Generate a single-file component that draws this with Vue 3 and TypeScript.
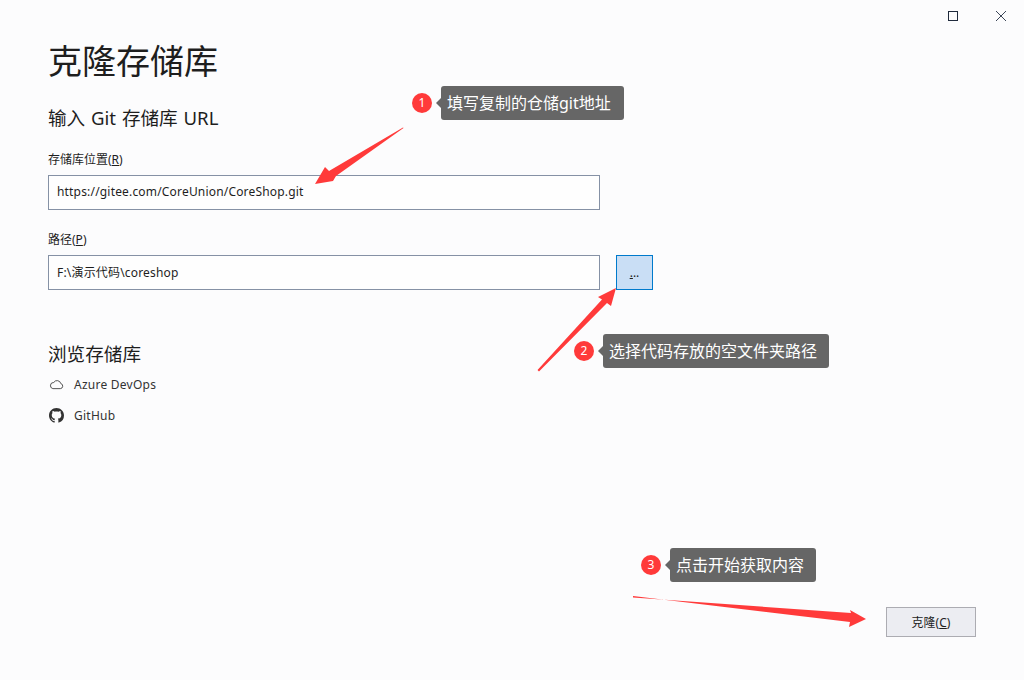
<script setup lang="ts">
interface Note {
  no: number
  text: string
  left: number
  top: number
  width: number
}

const notes: Note[] = [
  { no: 1, text: '填写复制的仓储git地址', left: 412, top: 86, width: 183 },
  { no: 2, text: '选择代码存放的空文件夹路径', left: 574, top: 334, width: 226 },
  { no: 3, text: '点击开始获取内容', left: 641, top: 548, width: 146 },
]

const arrows: string[] = [
  '403,127.5 403.5,128 336,176 333,181 315,184 325,167 329,171',
  '537.5,370 602,299.5 598,297 616,288 611,306 607,303 539,371.5',
  '633,596 633,597.5 851,613 850,610 866,619 849,627 850,622',
]
</script>

<template>
  <div class="dialog">
    <div class="window-bar">
      <svg class="win-btn" viewBox="0 0 10 10" width="10" height="10">
        <rect x="0.5" y="0.5" width="9" height="9" fill="none" stroke="#1f2a3c" />
      </svg>
      <svg class="win-btn" viewBox="0 0 10 10" width="10" height="10">
        <path d="M0 0L10 10M10 0L0 10" fill="none" stroke="#3c4658" />
      </svg>
    </div>

    <h1 class="title">克隆存储库</h1>
    <h2 class="section">输入 Git 存储库 URL</h2>

    <label class="field-label">存储库位置(<u>R</u>)</label>
    <div class="field-row">
      <div class="input">https://gitee.com/CoreUnion/CoreShop.git</div>
    </div>

    <label class="field-label second">路径(<u>P</u>)</label>
    <div class="field-row">
      <div class="input">F:\演示代码\coreshop</div>
      <button class="browse"><u>.</u>..</button>
    </div>

    <h2 class="section browse-title">浏览存储库</h2>
    <ul class="providers">
      <li>
        <svg viewBox="0 0 16 12" width="15" height="11" fill="none" stroke="#444" stroke-width="1">
          <path d="M4 10.5h8.2a2.8 2.8 0 0 0 .5-5.5A4.2 4.2 0 0 0 5 3.8 3.4 3.4 0 0 0 4 10.5z" />
        </svg>
        <span>Azure DevOps</span>
      </li>
      <li>
        <svg viewBox="0 0 16 16" width="15" height="15" fill="#333">
          <path d="M8 0C3.58 0 0 3.58 0 8c0 3.54 2.29 6.53 5.47 7.59.4.07.55-.17.55-.38 0-.19-.01-.82-.01-1.49-2.01.37-2.53-.49-2.69-.94-.09-.23-.48-.94-.82-1.13-.28-.15-.68-.52-.01-.53.63-.01 1.08.58 1.23.82.72 1.21 1.87.87 2.33.66.07-.52.28-.87.51-1.07-1.78-.2-3.64-.89-3.64-3.95 0-.87.31-1.59.82-2.15-.08-.2-.36-1.02.08-2.12 0 0 .67-.21 2.2.82.64-.18 1.32-.27 2-.27s1.36.09 2 .27c1.53-1.04 2.2-.82 2.2-.82.44 1.1.16 1.92.08 2.12.51.56.82 1.27.82 2.15 0 3.07-1.87 3.75-3.65 3.95.29.25.54.73.54 1.48 0 1.07-.01 1.93-.01 2.2 0 .21.15.46.55.38A8.01 8.01 0 0 0 16 8c0-4.42-3.58-8-8-8z" />
        </svg>
        <span>GitHub</span>
      </li>
    </ul>

    <footer class="actions">
      <button class="clone">克隆(<u>C</u>)</button>
    </footer>

    <svg class="arrows" width="1024" height="680" viewBox="0 0 1024 680">
      <polygon v-for="(points, i) in arrows" :key="i" :points="points" fill="#ff3a3a" />
    </svg>

    <div
      v-for="note in notes"
      :key="note.no"
      class="note"
      :style="{ left: `${note.left}px`, top: `${note.top}px` }"
    >
      <span class="badge">{{ note.no }}</span>
      <span class="tip" :style="{ width: `${note.width}px` }">{{ note.text }}</span>
    </div>
  </div>
</template>

<style scoped>
.dialog {
  position: relative;
  box-sizing: border-box;
  width: 1024px;
  height: 680px;
  padding: 0 48px;
  display: flex;
  flex-direction: column;
  overflow: hidden;
  background: #fcfcfd;
  color: #1e1e1e;
  font-family: "Noto Sans", "Noto Sans CJK SC", sans-serif;
  font-size: 12px;
}

.window-bar {
  display: flex;
  justify-content: flex-end;
  gap: 38px;
  height: 40px;
  margin-right: -30px;
  padding-top: 11px;
  box-sizing: border-box;
}

.win-btn {
  display: block;
}

.title {
  margin: -1px 0 1px;
  font-size: 34px;
  font-weight: 400;
  line-height: 44px;
  color: #1e1e1e;
}

.section {
  margin: 21px 0 0;
  font-size: 18.6px;
  font-weight: 400;
  line-height: 26px;
  word-spacing: 1px;
  color: #1e1e1e;
}

.field-label {
  margin-top: 20px;
  margin-bottom: -1px;
  line-height: 18px;
  font-size: 12px;
  color: #1e1e1e;
}

.field-label.second {
  margin-top: 21px;
}

.field-row {
  display: flex;
  gap: 16px;
  margin-top: 7px;
}

.input {
  box-sizing: border-box;
  width: 552px;
  height: 35px;
  padding: 0 8px 2px;
  display: flex;
  align-items: center;
  border: 1px solid #8591a5;
  background: #fefefe;
  font-size: 12px;
  letter-spacing: 0.18px;
}

.browse {
  box-sizing: border-box;
  width: 37px;
  height: 35px;
  padding: 0;
  border: 1px solid #007acc;
  background: #c9def5;
  color: #1e1e1e;
  font-family: inherit;
  font-size: 12px;
}

.browse-title {
  margin-top: 51px;
}

.providers {
  list-style: none;
  margin: 8px 0 0;
  padding: 0;
  display: flex;
  flex-direction: column;
  gap: 13px;
}

.providers li {
  display: flex;
  align-items: center;
  gap: 10px;
  height: 18px;
  padding-left: 1px;
  color: #333;
  letter-spacing: 0.25px;
}

.actions {
  margin-top: auto;
  margin-bottom: 43px;
  display: flex;
  justify-content: flex-end;
}

.clone {
  box-sizing: border-box;
  width: 90px;
  height: 30px;
  padding: 0;
  border: 1px solid #acacb2;
  background: #ecedf2;
  color: #1e1e1e;
  font-family: inherit;
  font-size: 12px;
}

.arrows {
  position: absolute;
  left: 0;
  top: 0;
  pointer-events: none;
}

.note {
  position: absolute;
  display: flex;
  align-items: center;
  gap: 9px;
}

.badge {
  width: 20px;
  height: 20px;
  border-radius: 50%;
  background: #ff3a3a;
  color: #fff;
  font-size: 12px;
  line-height: 20px;
  text-align: center;
}

.tip {
  position: relative;
  box-sizing: border-box;
  height: 34px;
  padding-left: 6px;
  border-radius: 3px;
  background: #666;
  color: #fff;
  font-size: 16px;
  line-height: 34px;
  white-space: nowrap;
}

.tip::before {
  content: "";
  position: absolute;
  left: -5px;
  top: 12px;
  border-style: solid;
  border-width: 5px 5px 5px 0;
  border-color: transparent #666 transparent transparent;
}
</style>

<style>
html,
body {
  background: #fcfcfd;
}
</style>
